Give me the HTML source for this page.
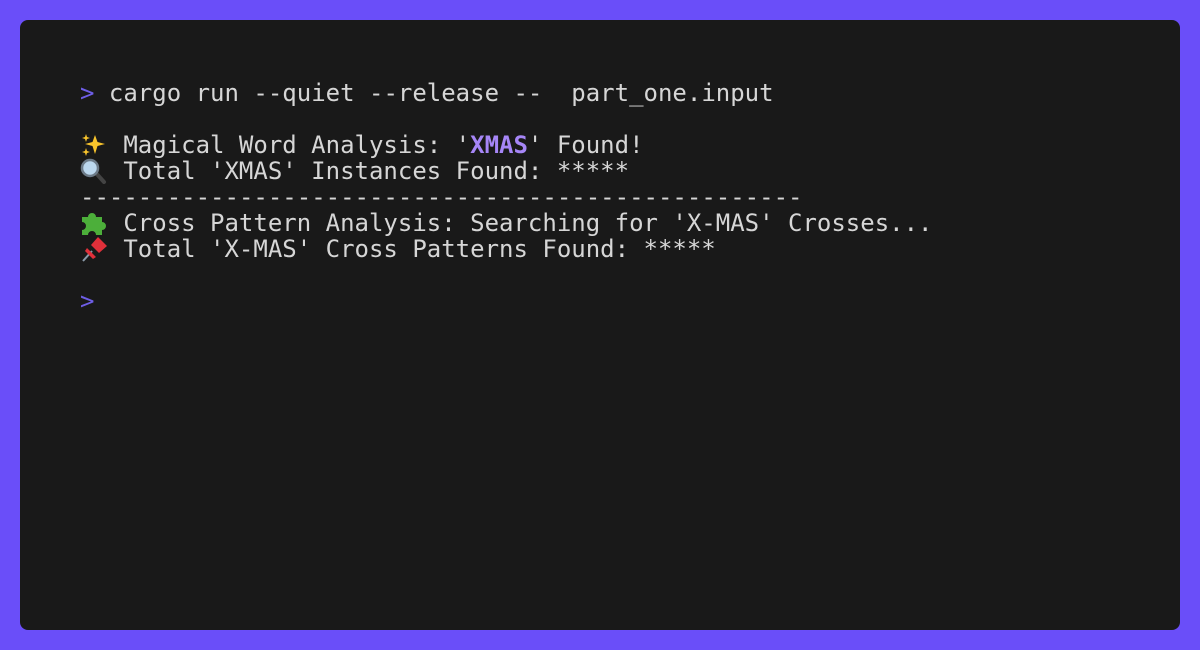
<!DOCTYPE html>
<html><head><meta charset="utf-8"><style>
html,body{margin:0;padding:0}
body{width:1200px;height:650px;background:#6a4ef9;position:relative;overflow:hidden}
.term{position:absolute;left:20px;top:20px;width:1160px;height:610px;background:#191919;border-radius:8px}
pre{position:absolute;left:60px;top:60px;margin:0;font-family:"DejaVu Sans Mono","Liberation Mono",monospace;font-size:24px;line-height:26px;color:#d6d6d6;white-space:pre}
.p{color:#6e5ee6}
.x{color:#a686f7;font-weight:bold}
.e{display:inline-block;width:2ch;height:26px;vertical-align:top;position:relative}
.e svg{position:absolute;left:0;top:0px}
</style></head><body>
<div class="term">
<pre><span class="p">&gt;</span> cargo run --quiet --release --  part_one.input

<span class="e"><svg width="28" height="26" viewBox="0 0 28 26"><path d="M15 3 L17.5 10 L25 12 L17.5 14 L15 22 L12.5 14 L5 12 L12.5 10Z" fill="#f8c42c"/><path d="M6 2 L7 5 L10 6 L7 7 L6 10 L5 7 L2 6 L5 5Z" fill="#f8c42c"/><path d="M6 16 L7 19 L10 20 L7 21 L6 24 L5 21 L2 20 L5 19Z" fill="#f8c42c"/></svg></span> Magical Word Analysis: '<span class="x">XMAS</span>' Found!
<span class="e"><svg width="28" height="26" viewBox="0 0 28 26"><line x1="15" y1="14" x2="24" y2="24" stroke="#444" stroke-width="4" stroke-linecap="round"/><circle cx="10" cy="10" r="8" fill="#bcd8ee" stroke="#6d7b88" stroke-width="2.5"/></svg></span> Total 'XMAS' Instances Found: *****
--------------------------------------------------
<span class="e"><svg width="28" height="26" viewBox="0 0 28 26"><path d="M2 7 H8 A4 4 0 1 1 16 7 H22 V12 A4 4 0 1 1 22 20 V25 H16 A4 4 0 1 0 8 25 H2 V20 A4 4 0 1 0 2 12Z" fill="#4caf3a"/></svg></span> Cross Pattern Analysis: Searching for 'X-MAS' Crosses...
<span class="e"><svg width="28" height="26" viewBox="0 0 28 26"><line x1="3" y1="25" x2="12" y2="15" stroke="#8a9aa8" stroke-width="2"/><path d="M11 9 L18 1 L27 10 L19 17Z M7 12 L16 21 L13 23 L5 15Z" fill="#e0303a"/></svg></span> Total 'X-MAS' Cross Patterns Found: *****

<span class="p">&gt;</span></pre>
</div>
</body></html>
